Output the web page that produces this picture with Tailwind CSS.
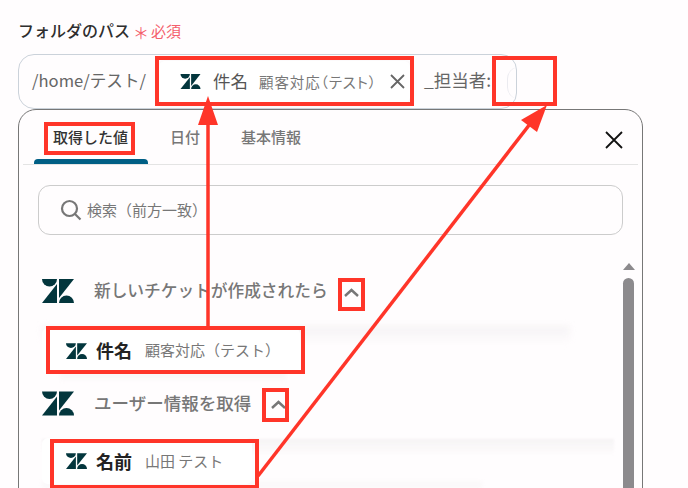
<!DOCTYPE html>
<html lang="ja">
<head>
    <meta charset="UTF-8">
    <meta name="viewport" content="width=device-width, initial-scale=1.0">
    <title>フォルダのパス</title>
    <script src="https://cdn.jsdelivr.net/npm/@tailwindcss/browser@4"></script>
</head>
<body class="bg-[#fffdfe] font-['Noto_Sans_CJK_JP','Noto_Sans',sans-serif] text-[#333]">

<div class="relative h-[488px] w-[688px] overflow-hidden pl-[18px] pt-[19px]">

    <!-- Field label -->
    <div class="flex h-[22px] items-center">
        <span class="text-[16px] font-medium leading-[22px] text-[#2e2e2e]">フォルダのパス</span>
        <span class="ml-[3px] mt-[3px] text-[16px] leading-[22px] text-[#f4606c]">＊</span>
        <span class="ml-[2px] mt-[2px] text-[15px] leading-[22px] text-[#f4606c]">必須</span>
    </div>

    <!-- Path input -->
    <div class="relative mt-[13px] flex h-[55px] w-[499px] items-center overflow-hidden rounded-[16px] border border-[#cbd2da] pb-[3px] pl-[13px]">
        <span class="w-[114px] shrink-0 whitespace-nowrap text-[16.6px] text-[#666]">/home/テスト/</span>
        <div class="ml-[13px] mt-[3px] flex h-[42px] w-[251px] shrink-0 items-center rounded-[6px] bg-white pl-[21px] shadow-[0_2px_10px_rgba(0,0,0,0.05)]">
            <svg class="h-[15px] w-[21px]" viewBox="0 0 32 24" fill="#03363d"><path d="M0 0H15A7.5 7.5 0 0 1 0 0Z"/><path d="M15 5V24H0Z"/><path d="M17 0H32L17 19Z"/><path d="M17 24A7.5 7.5 0 0 1 32 24Z"/></svg>
            <span class="ml-[12px] text-[17.5px] text-[#555]">件名</span>
            <span class="ml-[11px] whitespace-nowrap text-[14.5px] tracking-[0.9px] text-[#777] [font-feature-settings:'palt']">顧客対応（テスト）</span>
            <svg class="ml-auto mr-[5px] h-[15px] w-[15px]" viewBox="0 0 15 15" fill="none" stroke="#666" stroke-width="1.8"><path d="M1 1L14 14M14 1L1 14"/></svg>
        </div>
        <span class="ml-[14px] shrink-0 text-[17.5px] text-[#666]">_担当者:</span>
        <div class="absolute left-[488px] top-[12px] h-[32px] w-[12px] rounded-l-full border-l border-[#ebebf0]"></div>
    </div>

    <!-- Value picker panel -->
    <div class="h-[420px] w-[625px] rounded-t-[18px] border border-[#777] px-[4px]">
        <div class="relative flex h-[55px] items-start border-b border-[#e4e4e4] pl-[30px] pt-[16px] text-[15px] font-medium leading-[22px]">
            <span class="text-[#333]">取得した値</span>
            <span class="ml-[42px] text-[#777]">日付</span>
            <span class="ml-[41px] text-[#777]">基本情報</span>
            <div class="absolute bottom-0 left-[11px] h-[5px] w-[114px] rounded-t-[4px] bg-[#005f85]"></div>
            <svg class="absolute right-[15px] top-[21px] h-[18px] w-[18px]" viewBox="0 0 18 18" fill="none" stroke="#111" stroke-width="1.8"><path d="M1 1L17 17M17 1L1 17"/></svg>
        </div>

        <!-- Search -->
        <div class="ml-[15px] mt-[20px] flex h-[50px] w-[585px] items-center rounded-[12px] border border-[#cccccc] pl-[21px]">
            <svg class="h-[22px] w-[22px]" viewBox="0 0 22 22" fill="none" stroke="#777" stroke-width="2.2"><circle cx="9.5" cy="9.5" r="7.5"/><path d="M15 15L20.5 20.5"/></svg>
            <span class="ml-[5px] text-[15px] text-[#777]">検索（前方一致）</span>
        </div>

        <!-- Outputs list with scrollbar -->
        <div class="relative mt-[28px] pl-[19px]">
            <div class="absolute left-[599px] top-0 flex w-[13px] flex-col items-center">
                <div class="h-0 w-0 border-x-[6.5px] border-b-[7px] border-x-transparent border-b-[#8c8a8d]"></div>
                <div class="mt-[8px] h-[300px] w-[11px] rounded-t-[6px] bg-[#8c8a8d]"></div>
            </div>

            <div class="flex h-[40px] translate-y-[8px] items-center">
                <svg class="h-[24px] w-[32px]" viewBox="0 0 32 24" fill="#03363d"><path d="M0 0H15A7.5 7.5 0 0 1 0 0Z"/><path d="M15 5V24H0Z"/><path d="M17 0H32L17 19Z"/><path d="M17 24A7.5 7.5 0 0 1 32 24Z"/></svg>
                <span class="ml-[20px] w-[233px] whitespace-nowrap text-[16.7px] font-medium text-[#777]">新しいチケットが作成されたら</span>
                <svg class="ml-[17px] mt-[3px] h-[9px] w-[15px]" viewBox="0 0 15 9" fill="none" stroke="#777" stroke-width="2.4"><path d="M1 8L7.5 2L14 8"/></svg>
            </div>

            <div class="relative mt-[25px]">
                <div class="absolute left-0 top-[-2px] h-[18px] w-[528px] bg-gradient-to-b from-[#f5f3f4] to-transparent blur-[3px]"></div>
                <div class="absolute left-[18px] top-[44px] h-[10px] w-[226px] bg-gradient-to-b from-[#f5f3f4] to-transparent blur-[2px]"></div>
                <div class="relative flex h-[46px] w-[258px] items-center rounded-[6px] bg-white pb-[1px] pl-[24px]">
                    <svg class="h-[16px] w-[21px]" viewBox="0 0 32 24" fill="#03363d"><path d="M0 0H15A7.5 7.5 0 0 1 0 0Z"/><path d="M15 5V24H0Z"/><path d="M17 0H32L17 19Z"/><path d="M17 24A7.5 7.5 0 0 1 32 24Z"/></svg>
                    <span class="ml-[9px] text-[18px] font-bold text-[#222]">件名</span>
                    <span class="ml-[13px] whitespace-nowrap text-[15px] text-[#777]">顧客対応（テスト）</span>
                </div>
            </div>

            <div class="mt-[9px] flex h-[40px] items-center">
                <svg class="h-[25px] w-[32px]" viewBox="0 0 32 24" fill="#03363d"><path d="M0 0H15A7.5 7.5 0 0 1 0 0Z"/><path d="M15 5V24H0Z"/><path d="M17 0H32L17 19Z"/><path d="M17 24A7.5 7.5 0 0 1 32 24Z"/></svg>
                <span class="ml-[20px] w-[159px] whitespace-nowrap text-[17.5px] font-medium text-[#777]">ユーザー情報を取得</span>
                <svg class="ml-[18px] mt-[3px] h-[9px] w-[15px]" viewBox="0 0 15 9" fill="none" stroke="#777" stroke-width="2.4"><path d="M1 8L7.5 2L14 8"/></svg>
            </div>

            <div class="relative mt-[15px]">
                <div class="absolute left-0 top-[1px] h-[16px] w-[572px] bg-gradient-to-b from-[#f5f3f4] to-transparent blur-[1px]"></div>
                <div class="absolute left-0 top-[44px] h-[10px] w-[440px] bg-gradient-to-b from-[#f8f6f7] to-transparent blur-[2px]"></div>
                <div class="relative flex h-[46px] w-[210px] items-center rounded-[6px] bg-white pl-[24px]">
                    <svg class="h-[16px] w-[21px]" viewBox="0 0 32 24" fill="#03363d"><path d="M0 0H15A7.5 7.5 0 0 1 0 0Z"/><path d="M15 5V24H0Z"/><path d="M17 0H32L17 19Z"/><path d="M17 24A7.5 7.5 0 0 1 32 24Z"/></svg>
                    <span class="ml-[9px] text-[18px] font-bold text-[#222]">名前</span>
                    <span class="ml-[13px] whitespace-nowrap text-[15px] text-[#777]">山田 テスト</span>
                </div>
            </div>
        </div>
    </div>

    <!-- Red annotations drawn over the screenshot -->
    <svg class="absolute left-0 top-0" width="688" height="488" viewBox="0 0 688 488" fill="none" stroke="#ff3529" stroke-width="4">
        <rect x="157" y="58" width="255" height="46"/>
        <rect x="494" y="58" width="61" height="46"/>
        <rect x="46" y="124" width="87" height="29"/>
        <rect x="340" y="280" width="23" height="29"/>
        <rect x="48" y="328" width="255" height="44"/>
        <rect x="264" y="390" width="23" height="30"/>
        <rect x="52" y="441" width="205" height="46"/>
        <path d="M208 326V118" stroke-width="3.5"/>
        <path d="M208 96L218 125H198Z" fill="#ff3529" stroke="none"/>
        <path d="M258 476L530 124" stroke-width="3.5"/>
        <path d="M547 105L537 132L521 120Z" fill="#ff3529" stroke="none"/>
    </svg>
</div>

</body>
</html>
